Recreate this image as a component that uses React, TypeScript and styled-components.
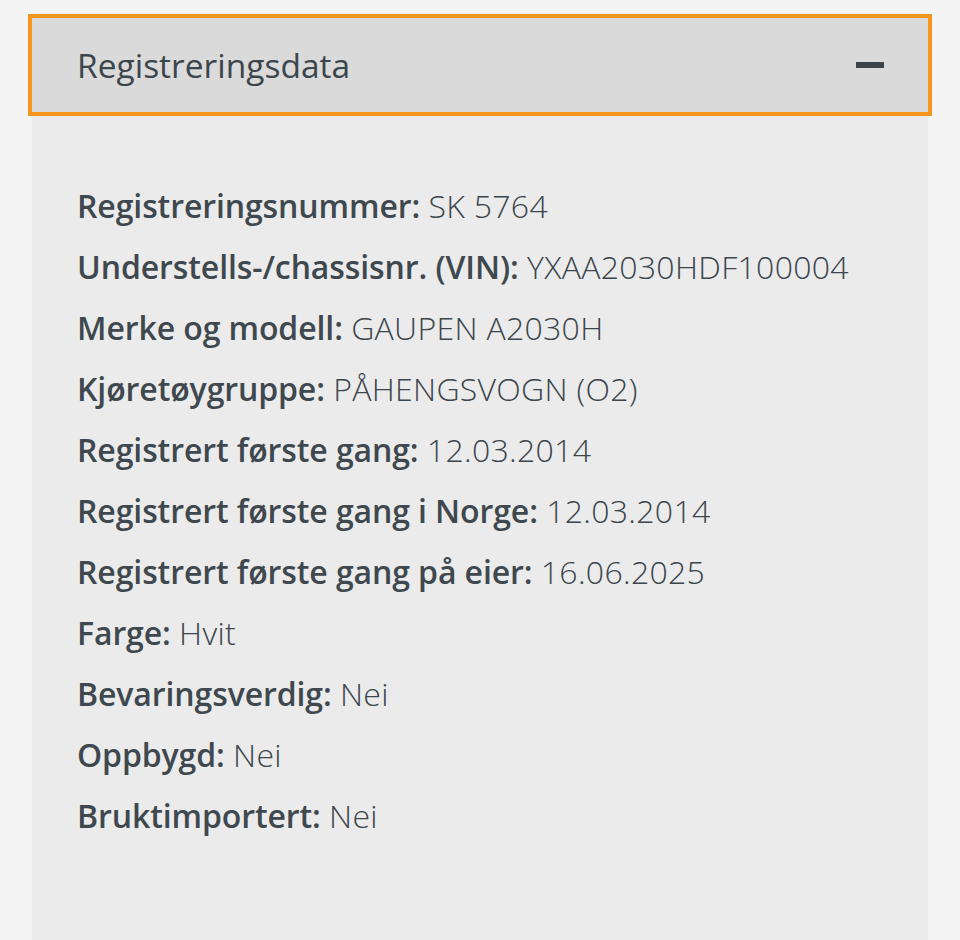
import React, { useState } from 'react';
import styled, { createGlobalStyle } from 'styled-components';

const GlobalStyle = createGlobalStyle`
    html, body {
        margin: 0;
        padding: 0;
        background: #f4f4f4;
    }
    body {
        font-family: "Open Sans", Lato, "Liberation Sans", sans-serif;
        color: #3b454b;
    }
`;

interface Field {
    label: string;
    value: string;
}

const fields: Field[] = [
    { label: 'Registreringsnummer:', value: 'SK 5764' },
    { label: 'Understells-/chassisnr. (VIN):', value: 'YXAA2030HDF100004' },
    { label: 'Merke og modell:', value: 'GAUPEN A2030H' },
    { label: 'Kjøretøygruppe:', value: 'PÅHENGSVOGN (O2)' },
    { label: 'Registrert første gang:', value: '12.03.2014' },
    { label: 'Registrert første gang i Norge:', value: '12.03.2014' },
    { label: 'Registrert første gang på eier:', value: '16.06.2025' },
    { label: 'Farge:', value: 'Hvit' },
    { label: 'Bevaringsverdig:', value: 'Nei' },
    { label: 'Oppbygd:', value: 'Nei' },
    { label: 'Bruktimportert:', value: 'Nei' },
];

const App = () => {
    const [open, setOpen] = useState(true);

    return (
        <>
            <GlobalStyle />
            <Page>
                <Header onClick={() => setOpen(!open)}>
                    <Title>Registreringsdata</Title>
                    <Toggle>{!open && <PlusBar />}</Toggle>
                </Header>
                {open && (
                    <Panel>
                        {fields.map(f => (
                            <Row key={f.label}>
                                <Label>{f.label}</Label> <Value>{f.value}</Value>
                            </Row>
                        ))}
                    </Panel>
                )}
            </Page>
        </>
    );
};

export default App;

const Page = styled.div`
    padding: 14px 28px 0 28px;
    height: 940px;
    box-sizing: border-box;
    display: flex;
    flex-direction: column;
`;

const Header = styled.button`
    display: flex;
    align-items: center;
    justify-content: space-between;
    height: 102px;
    box-sizing: border-box;
    border: 4px solid #f7961e;
    background: #dadada;
    padding: 0 44px 0 45px;
    font: inherit;
    color: inherit;
    cursor: pointer;
    text-align: left;
`;

const Title = styled.span`
    font-size: 33.5px;
    font-weight: 400;
`;

// minus sign, the vertical bar shows up when collapsed
const Toggle = styled.span`
    position: relative;
    width: 28px;
    height: 6px;
    background: #3b454b;
`;

const PlusBar = styled.span`
    position: absolute;
    left: 11px;
    top: -11px;
    width: 6px;
    height: 28px;
    background: #3b454b;
`;

const Panel = styled.div`
    flex: 1;
    margin: 0 4px;
    background: #ebebeb;
    padding: 59px 45px 0 45px;
    display: flex;
    flex-direction: column;
`;

const Row = styled.p`
    margin: 0;
    font-size: 32px;
    line-height: 61px;
    white-space: nowrap;
`;

const Label = styled.span`
    font-weight: 600;
    letter-spacing: -0.1px;
    color: #3e484e;
`;

const Value = styled.span`
    font-weight: 300;
    letter-spacing: 0.3px;
`;
